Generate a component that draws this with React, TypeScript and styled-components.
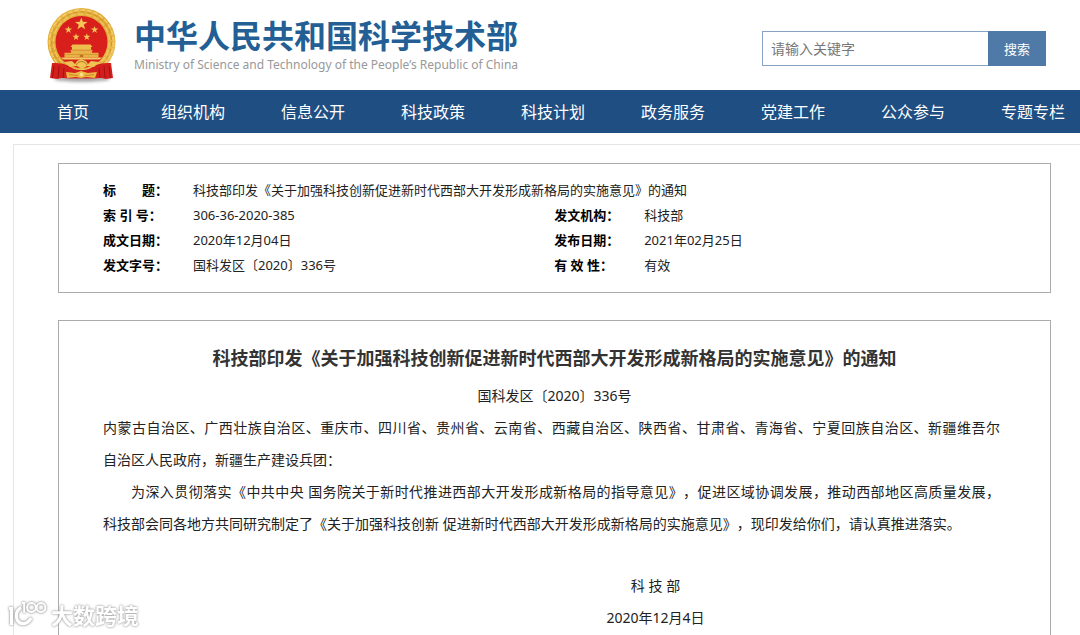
import React from "react";
import styled, { createGlobalStyle } from "styled-components";

const sans = `"Noto Sans", "Noto Sans CJK SC", sans-serif`;

const GlobalStyle = createGlobalStyle`
  *, *::before, *::after { box-sizing: border-box; }
  body {
    margin: 0;
    background: #fff;
    color: #222;
    font-family: ${sans};
    text-spacing-trim: space-all;
    overflow-x: hidden;
  }
`;

const Page = styled.div`
  display: flex;
  flex-direction: column;
  min-height: 100vh;
  overflow: hidden;
`;

const Header = styled.header`
  display: flex;
  align-items: center;
  justify-content: space-between;
  height: 90px;
  padding: 0 34px 0 40px;
`;

const Brand = styled.a`
  display: flex;
  align-items: center;
  gap: 10px;
  text-decoration: none;
`;

const BrandText = styled.span`
  display: flex;
  flex-direction: column;
  gap: 4px;
`;

const BrandName = styled.span`
  color: #235f95;
  font-family: "Noto Sans CJK SC", sans-serif;
  font-size: 32px;
  font-weight: 700;
  line-height: 36px;
  white-space: nowrap;
`;

const BrandSub = styled.span`
  color: #999;
  font-size: 12px;
  line-height: 18px;
  white-space: nowrap;
`;

const SearchForm = styled.form`
  display: flex;
  width: 284px;
  height: 35px;
  margin-top: 7px;
`;

const SearchInput = styled.input`
  flex: 1;
  min-width: 0;
  padding: 0 8px;
  border: 1px solid #86a3c3;
  border-right: 0;
  border-radius: 0;
  outline: 0;
  font-family: ${sans};
  font-size: 14px;
  &::placeholder { color: #777; opacity: 1; }
`;

const SearchButton = styled.button`
  width: 58px;
  padding: 0;
  border: 0;
  background: #4f79a6;
  color: #fff;
  font-family: ${sans};
  font-size: 13px;
`;

const Nav = styled.nav`
  display: flex;
  flex: none;
  height: 43px;
  padding-left: 13px;
  background: #1f4e82;
`;

const NavLink = styled.a`
  flex: 0 0 120px;
  color: #fff;
  font-size: 16px;
  line-height: 45px;
  text-align: center;
  text-decoration: none;
`;

const Main = styled.main`
  display: flex;
  flex: 1;
  flex-direction: column;
  gap: 27px;
  margin: 11px 0 0 13px;
  padding: 18px 29px 0 44px;
  border-top: 1px solid #e6e6e6;
  border-left: 1px solid #e6e6e6;
`;

const MetaBox = styled.section`
  padding: 14px 44px;
  border: 1px solid #aaa;
`;

const MetaTable = styled.table`
  width: 100%;
  border-collapse: collapse;
  table-layout: fixed;
  font-size: 13px;
  line-height: 25px;
`;

const LabelCol = styled.col`
  width: 90px;
`;

const ValueCol = styled.col`
  width: 40%;
`;

const MetaLabel = styled.th`
  padding: 0;
  color: #000;
  font-weight: 700;
  text-align: left;
  white-space: nowrap;
`;

const MetaValue = styled.td`
  padding: 0;
`;

const Article = styled.article`
  flex: 1;
  padding-top: 21px;
  border: 1px solid #aaa;
  border-bottom: 0;
`;

const ArticleTitle = styled.h1`
  margin: 0 0 6px;
  color: #333;
  font-size: 18px;
  font-weight: 700;
  line-height: 32px;
  text-align: center;
`;

const DocNumber = styled.p`
  margin: 0;
  font-size: 14px;
  line-height: 32px;
  text-align: center;
`;

const ArticleBody = styled.div`
  padding: 0 50px 0 44px;
  font-size: 14px;
  line-height: 32px;
`;

const Paragraph = styled.p<{ $indent?: boolean }>`
  margin: 0;
  text-align: justify;
  text-indent: ${(p) => (p.$indent ? "2em" : "0")};
`;

const Phrase = styled.span`
  white-space: nowrap;
`;

const Signature = styled.div`
  margin: 30px 0 0 208px;
  text-align: center;
`;

const SignatureLine = styled.p`
  margin: 0;
`;

const Watermark = styled.div`
  position: fixed;
  bottom: 6px;
  left: 6px;
  display: flex;
  align-items: center;
  gap: 3px;
  color: #fff;
  font-family: "Noto Sans CJK SC", sans-serif;
  font-size: 22px;
  font-weight: 700;
  line-height: 28px;
  text-shadow: 0 0 2px #999, 0 0 3px #bbb;
  svg { filter: drop-shadow(0 0 1px #999) drop-shadow(0 0 1px #ccc); }
`;

function starPoints(cx: number, cy: number, r: number) {
  return Array.from({ length: 10 }, (_, i) => {
    const radius = i % 2 ? r * 0.4 : r;
    const a = (Math.PI / 5) * i - Math.PI / 2;
    return `${(cx + radius * Math.cos(a)).toFixed(2)},${(cy + radius * Math.sin(a)).toFixed(2)}`;
  }).join(" ");
}

const stars: [number, number, number][] = [
  [41.3, 23, 6.6],
  [28.4, 28.8, 3.9],
  [54.6, 28.8, 3.9],
  [36, 36, 3.7],
  [46.8, 36, 3.7],
];

function Emblem() {
  return (
    <svg width="84" height="88" viewBox="0 0 84 88" aria-hidden="true">
      <defs>
        <linearGradient id="gold" x1="0" y1="0" x2="1" y2="1">
          <stop offset="0" stopColor="#e9b744" />
          <stop offset="0.5" stopColor="#dfa636" />
          <stop offset="1" stopColor="#ecc355" />
        </linearGradient>
        <filter id="soft" x="-20%" y="-50%" width="140%" height="200%">
          <feGaussianBlur stdDeviation="1.6" />
        </filter>
      </defs>
      <ellipse cx="42" cy="78" rx="28" ry="3" fill="#aaa" filter="url(#soft)" />
      <circle cx="41.5" cy="41" r="34" fill="url(#gold)" />
      <circle cx="41.5" cy="41" r="32" fill="none" stroke="#f3cd66" strokeWidth="1.6" strokeDasharray="5 1.5" />
      <circle cx="41.5" cy="41" r="30" fill="none" stroke="#cb9029" strokeWidth="0.9" strokeDasharray="4 3" />
      <circle cx="41.5" cy="41" r="28" fill="none" stroke="#f0c75c" strokeWidth="1.4" strokeDasharray="6 2" />
      <circle cx="41.5" cy="41" r="26" fill="#d91f1c" />
      {stars.map(([x, y, r]) => (
        <polygon key={`${x}`} points={starPoints(x, y, r)} fill="#f3c657" />
      ))}
      <path d="M32.5 43.5h18l2 2.5h-22zM32 46h19v2.4l2.5 1.4h-24l2.5-1.4z" fill="#efbd4e" />
      <path d="M31 49.6h21v2.2h6.5v4.6h-34v-4.6H31z" fill="#e9b246" />
      <path d="M31.5 49h20M25 53.4h33" stroke="#c58525" strokeWidth="0.6" />
      <path d="M39.8 53.8h3.4v2.6h-3.4z" fill="#b97318" />
      <path d="M21 56.4h41l-2.5 2.2h-36z" fill="#f2cb62" />
      <path d="M12 62c10 0 15 1 20 5 6 3 13 3 19 0 5-4 10-5 20-5l2 15-7 1-5-1-7 .5H29l-7-.5-5 1-7-1z" fill="#d3201d" />
      <path d="M14 65l-1.500 12M19 65l-1 12M24 67l-1 10M59 67l1 10M64 65l1 12M69 65l1.500 12" stroke="#9e0f12" strokeWidth="0.9" />
      <path d="M24 61l8-1 3 3 2-3 4-2 5 2 2 3 3-3 8 1-5 5-7-1-5 3-5-3-7 1z" fill="#f0c252" />
      <path d="M36 64a6 6 0 0 1 11 0" fill="none" stroke="#bc7a1c" strokeWidth="1" />
      <path d="M26 71l9 1 6-2 7 2 9-1-2 6-9-1-5 1-5-1-9 1z" fill="#edb945" />
      <path d="M29 73.600l9 1M54 73.600l-9 1" stroke="#c17718" strokeWidth="0.8" />
      <circle cx="41.5" cy="73.6" r="1.8" fill="#fae090" />
    </svg>
  );
}

function WatermarkLogo() {
  return (
    <svg width="42" height="30" viewBox="0 0 42 30" fill="none" stroke="#fff" aria-hidden="true">
      <path d="M3 9.500h2.500v16.500" strokeWidth="3" />
      <path d="M15 8.500c-5 3-6 9-3.500 13 3 4.500 10 4.500 13.500-2.500" strokeWidth="3.200" />
      <path d="M16 4h2.200v10" strokeWidth="2" />
      <circle cx="25.5" cy="8.5" r="4.400" strokeWidth="2" />
      <circle cx="35" cy="8.5" r="4.400" strokeWidth="2" />
    </svg>
  );
}

const navItems = [
  "首页",
  "组织机构",
  "信息公开",
  "科技政策",
  "科技计划",
  "政务服务",
  "党建工作",
  "公众参与",
  "专题专栏",
];

const title = "科技部印发《关于加强科技创新促进新时代西部大开发形成新格局的实施意见》的通知";

const metaRows = [
  ["索 引 号：", "306-36-2020-385", "发文机构：", "科技部"],
  ["成文日期：", "2020年12月04日", "发布日期：", "2021年02月25日"],
  ["发文字号：", "国科发区〔2020〕336号", "有 效 性：", "有效"],
];

export default function App() {
  return (
    <Page lang="zh-CN">
      <GlobalStyle />
      <Header>
        <Brand href="#">
          <Emblem />
          <BrandText>
            <BrandName>中华人民共和国科学技术部</BrandName>
            <BrandSub>Ministry of Science and Technology of the People’s Republic of China</BrandSub>
          </BrandText>
        </Brand>
        <SearchForm role="search" onSubmit={(e) => e.preventDefault()}>
          <SearchInput type="text" aria-label="请输入关键字" placeholder="请输入关键字" />
          <SearchButton type="submit">搜索</SearchButton>
        </SearchForm>
      </Header>
      <Nav>
        {navItems.map((item) => (
          <NavLink key={item} href="#">
            {item}
          </NavLink>
        ))}
      </Nav>
      <Main>
        <MetaBox>
          <MetaTable>
            <colgroup>
              <LabelCol />
              <ValueCol />
              <LabelCol />
              <col />
            </colgroup>
            <tbody>
              <tr>
                <MetaLabel scope="row">标&emsp;&emsp;题：</MetaLabel>
                <MetaValue colSpan={3}>{title}</MetaValue>
              </tr>
              {metaRows.map(([labelA, valueA, labelB, valueB]) => (
                <tr key={labelA}>
                  <MetaLabel scope="row">{labelA}</MetaLabel>
                  <MetaValue>{valueA}</MetaValue>
                  <MetaLabel scope="row">{labelB}</MetaLabel>
                  <MetaValue>{valueB}</MetaValue>
                </tr>
              ))}
            </tbody>
          </MetaTable>
        </MetaBox>
        <Article>
          <ArticleTitle>{title}</ArticleTitle>
          <DocNumber>国科发区〔2020〕336号</DocNumber>
          <ArticleBody>
            <Paragraph>
              内蒙古自治区、广西壮族自治区、重庆市、四川省、贵州省、云南省、西藏自治区、陕西省、甘肃省、青海省、宁夏回族自治区、新疆维吾尔
              <wbr />
              <Phrase>自治区人民政府，</Phrase>新疆生产建设兵团：
            </Paragraph>
            <Paragraph $indent>
              为深入贯彻落实《中共中央 国务院关于新时代推进西部大开发形成新格局的指导意见》，促进区域协调发展，推动西部地区高质量发展，
              <wbr />
              <Phrase>科技部会同各地方</Phrase>共同研究制定了《关于加强科技创新 促进新时代西部大开发形成新格局的实施意见》，现印发给你们，请认真推进落实。
            </Paragraph>
            <Signature>
              <SignatureLine>科 技 部</SignatureLine>
              <SignatureLine>2020年12月4日</SignatureLine>
            </Signature>
          </ArticleBody>
        </Article>
      </Main>
      <Watermark>
        <WatermarkLogo />
        <span>大数跨境</span>
      </Watermark>
    </Page>
  );
}
